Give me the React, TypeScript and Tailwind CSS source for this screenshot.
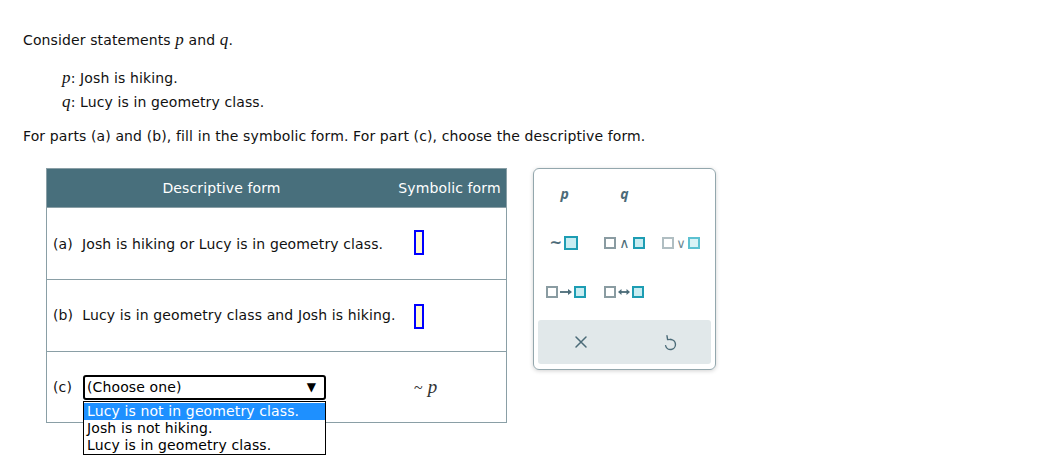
import React from "react";

const font = { fontFamily: '"DejaVu Sans", Verdana, sans-serif' };

function Box({ filled, light }: { filled?: boolean; light?: boolean }) {
  if (filled)
    return (
      <span
        className={
          light
            ? "inline-block w-[12px] h-[12px] border-2 border-[#5cc1d1] bg-[#d9f3f6]"
            : "inline-block w-[12px] h-[12px] border-2 border-[#1d9db3] bg-[#c8edf2]"
        }
      />
    );
  return (
    <span
      className={
        light
          ? "inline-block w-[12px] h-[12px] border-2 border-[#b0bec2] bg-white"
          : "inline-block w-[12px] h-[12px] border-2 border-[#8a9ca2] bg-white"
      }
    />
  );
}

function Blank() {
  return <span className="inline-block w-[10px] h-[25px] border-2 border-[#0000ff] bg-[#fff8d2] align-middle" />;
}

export default function App() {
  return (
    <div className="w-[1037px] h-[459px] bg-white text-[14px] tracking-[0.12px] text-[#111] relative" style={font}>
      <div className="pl-[23px] pt-[30px]">
        <div className="h-[20px] leading-[20px]">
          Consider statements <i className="font-['Liberation_Serif'] text-[17px]">p</i> and{" "}
          <i className="font-['Liberation_Serif'] text-[17px]">q</i>.
        </div>
        <div className="pl-[39px] mt-[16px] leading-[24px]">
          <div>
            <i className="font-['Liberation_Serif'] text-[17px]">p</i>: Josh is hiking.
          </div>
          <div>
            <i className="font-['Liberation_Serif'] text-[17px]">q</i>: Lucy is in geometry class.
          </div>
        </div>
        <div className="mt-[12px] leading-[20px]">
          For parts (a) and (b), fill in the symbolic form. For part (c), choose the descriptive form.
        </div>

        <div className="flex items-start gap-[26px] mt-[22px] pl-[23px]">
          {/* table */}
          <div className="w-[461px] border border-[#8a9fa6] relative">
            <div className="flex h-[38px] items-center bg-[#486f7c] text-white">
              <div className="w-[349px] text-center">Descriptive form</div>
              <div className="flex-1 text-center pr-[3px]">Symbolic form</div>
            </div>
            <div className="flex h-[72px] items-center border-t border-[#8a9fa6]">
              <div className="w-[367px] pl-[6px] pt-[1px]">(a)&nbsp; Josh is hiking or Lucy is in geometry class.</div>
              <div className="flex-1 pb-[2px]">
                <Blank />
              </div>
            </div>
            <div className="flex h-[72px] items-center border-t border-[#8a9fa6]">
              <div className="w-[367px] pl-[6px] whitespace-nowrap">(b)&nbsp; Lucy is in geometry class and Josh is hiking.</div>
              <div className="flex-1 pt-[2px]">
                <Blank />
              </div>
            </div>
            <div className="flex h-[71px] items-center border-t border-[#8a9fa6]">
              <div className="w-[367px] pl-[6px] flex items-center">
                <span>(c)</span>
                <div className="relative ml-[11px]">
                  <div className="w-[243px] h-[25px] border-2 border-black rounded-[3px] flex items-center justify-between pl-[2px] pr-[8px] text-black">
                    <span>(Choose one)</span>
                    <span className="text-[12px]">▼</span>
                  </div>
                  <div className="absolute left-0 top-[26px] w-[243px] border border-black bg-white text-black leading-[17px] pt-[1px] z-10">
                    <div className="bg-[#1e90ff] text-white pl-[3px]">Lucy is not in geometry class.</div>
                    <div className="pl-[3px]">Josh is not hiking.</div>
                    <div className="pl-[3px]">Lucy is in geometry class.</div>
                  </div>
                </div>
              </div>
              <div className="flex-1 text-[#333] flex items-baseline gap-[5px]">
                <span className="font-['Liberation_Serif'] text-[16px]">~</span>
                <i className="font-['Liberation_Serif'] text-[19px]">p</i>
              </div>
            </div>
          </div>

          {/* palette */}
          <div className="w-[183px] h-[202px] border border-[#93a7ad] rounded-[6px] shadow-[0_1px_4px_rgba(0,0,0,0.18)] flex flex-col p-[4px] text-[#4b6b78]">
            <div className="grid grid-cols-3 grid-rows-[40px_60px_38px]">
              <div className="flex items-center justify-center pr-[4px] font-bold italic text-[14px]" style={{ fontFamily: '"Open Sans", sans-serif' }}>
                p
              </div>
              <div className="flex items-center justify-center font-bold italic text-[14px]" style={{ fontFamily: '"Open Sans", sans-serif' }}>
                q
              </div>
              <div />
              <div className="flex items-center justify-center gap-[2px] pr-[6px]">
                <span className="text-[15px] leading-none font-bold">~</span>
                <span className="inline-block w-[14px] h-[14px] border-2 border-[#1d9db3] bg-[#c8edf2]" />
              </div>
              <div className="flex items-center justify-center gap-[3px]">
                <Box />
                <span className="text-[14px] leading-none">∧</span>
                <Box filled />
              </div>
              <div className="flex items-center justify-center gap-[2px] pr-[2px]">
                <Box light />
                <span className="text-[13px] leading-none text-[#6f8c96]">∨</span>
                <Box filled light />
              </div>
              <div className="flex items-center justify-center gap-[1px] pr-[2px]">
                <Box />
                <svg width="14" height="8" viewBox="0 0 14 8">
                  <path d="M1 4H10" stroke="#4b6b78" strokeWidth="1.8" />
                  <path d="M9 1L13 4L9 7Z" fill="#4b6b78" />
                </svg>
                <Box filled />
              </div>
              <div className="flex items-center justify-center gap-[1px]">
                <Box />
                <svg width="14" height="8" viewBox="0 0 14 8">
                  <path d="M3 4H11" stroke="#4b6b78" strokeWidth="1.8" />
                  <path d="M4.5 1L1 4L4.5 7Z" fill="#4b6b78" />
                  <path d="M9.5 1L13 4L9.5 7Z" fill="#4b6b78" />
                </svg>
                <Box filled />
              </div>
              <div />
            </div>
            <div className="h-[44px] mt-[9px] bg-[#e1e8ea] rounded-[3px] flex items-center">
              <div className="flex-1 flex justify-center pl-[2px]">
                <svg width="14" height="14" viewBox="0 0 14 14" stroke="#4b6b78" strokeWidth="1.5" strokeLinecap="round">
                  <path d="M2 2L12 12M12 2L2 12" />
                </svg>
              </div>
              <div className="flex-1 flex justify-center pl-[6px]">
                <svg width="14" height="17" viewBox="0 0 14 17" fill="none" stroke="#4b6b78" strokeWidth="1.4" strokeLinecap="round" strokeLinejoin="round">
                  <path d="M7.5 5.5 A5 5 0 1 1 2.6 11.6" />
                  <path d="M4 1.8 L4.6 5.6 L8.2 5.4" />
                </svg>
              </div>
            </div>
          </div>
        </div>
      </div>
    </div>
  );
}
